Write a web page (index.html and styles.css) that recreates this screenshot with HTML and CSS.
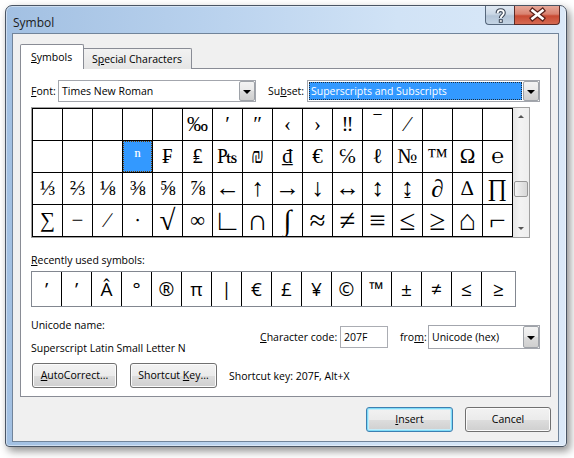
FILE: index.html
```html
<html lang="en">
<head>
  <meta charset="UTF-8">
  <title>Symbol</title>
  <link rel="stylesheet" href="styles.css">
</head>
<body>
  <div class="window">
    <div class="titlebar">
      <div class="title">Symbol</div>
      <div class="caption-btns">
        <div class="cap-btn help">
          <svg width="29" height="19" viewBox="0 0 29 19">
            <path d="M11.6 8.2 C11.6 6.2 13 5.2 14.7 5.2 C16.6 5.2 17.8 6.4 17.8 8 C17.8 10.4 14.8 10.6 14.8 13" fill="none" stroke="#3b4656" stroke-width="4"/>
            <rect x="12.8" y="14.2" width="4" height="3.6" fill="#3b4656"/>
            <path d="M11.6 8.2 C11.6 6.2 13 5.2 14.7 5.2 C16.6 5.2 17.8 6.4 17.8 8 C17.8 10.4 14.8 10.6 14.8 13" fill="none" stroke="#fff" stroke-width="1.8"/>
            <rect x="13.8" y="15.2" width="2" height="1.6" fill="#fff"/>
          </svg>
        </div>
        <div class="cap-btn close">
          <svg width="46" height="19" viewBox="0 0 46 19">
            <path d="M18.5 5.5 L28.5 13.5 M28.5 5.5 L18.5 13.5" stroke="#5a211a" stroke-width="5" stroke-linecap="square"/>
            <path d="M18.5 5.5 L28.5 13.5 M28.5 5.5 L18.5 13.5" stroke="#fff" stroke-width="2.6" stroke-linecap="square"/>
          </svg>
        </div>
      </div>
    </div>

    <div class="client">
      <div class="tabs">
        <div class="tab active"><u>S</u>ymbols</div>
        <div class="tab">S<u>p</u>ecial Characters</div>
      </div>

      <div class="panel">
        <div class="font-row">
          <span class="lbl lbl-font"><u>F</u>ont:</span>
          <div class="combo combo-font">
            <span class="combo-text">Times New Roman</span>
            <span class="drop"><i class="tri"></i></span>
          </div>
          <span class="lbl lbl-subset">Su<u>b</u>set:</span>
          <div class="combo combo-subset">
            <span class="combo-text selected">Superscripts and Subscripts</span>
            <span class="drop"><i class="tri"></i></span>
          </div>
        </div>

        <div class="charmap">
          <div class="cells">
            <div></div><div></div><div></div><div></div><div></div><div>‰</div><div>′</div><div>″</div>
            <div>‹</div><div>›</div><div>‼</div><div>‾</div><div>⁄</div><div></div><div></div><div></div>

            <div></div><div></div><div></div><div class="sel">ⁿ</div><div>₣</div><div>₤</div><div>₧</div><div>₪</div>
            <div>₫</div><div>€</div><div>℅</div><div>ℓ</div><div>№</div><div>™</div><div>Ω</div><div>℮</div>

            <div>⅓</div><div>⅔</div><div>⅛</div><div>⅜</div><div>⅝</div><div>⅞</div><div class="ar">←</div><div class="ar">↑</div>
            <div class="ar">→</div><div class="ar">↓</div><div class="ar">↔</div><div class="ar">↕</div><div class="ar">↨</div><div class="pd">∂</div><div>∆</div><div class="pr">∏</div>

            <div>∑</div><div>−</div><div>∕</div><div>∙</div><div class="op">√</div><div>∞</div><div class="op">∟</div><div class="op">∩</div>
            <div class="op">∫</div><div class="op">≈</div><div class="op">≠</div><div class="op">≡</div><div class="op">≤</div><div class="op">≥</div><div class="op">⌂</div><div class="op">⌐</div>
          </div>
          <div class="scrollbar">
            <div class="sb-btn"><i class="arrow up"></i></div>
            <div class="sb-track"><div class="sb-thumb"></div></div>
            <div class="sb-btn"><i class="arrow down"></i></div>
          </div>
        </div>

        <div class="recent-label"><u>R</u>ecently used symbols:</div>
        <div class="recent">
          <div>’</div><div>’</div><div>Â</div><div>°</div><div>®</div><div>π</div><div>|</div><div>€</div>
          <div>£</div><div>¥</div><div>©</div><div>™</div><div>±</div><div>≠</div><div>≤</div><div>≥</div>
        </div>

        <div class="info-row">
          <div class="uname">
            <div>Unicode name:</div>
            <div class="uname-val">Superscript Latin Small Letter N</div>
          </div>
          <span class="lbl lbl-code"><u>C</u>haracter code:</span>
          <div class="textbox">207F</div>
          <span class="lbl lbl-from">fro<u>m</u>:</span>
          <div class="combo combo-from">
            <span class="combo-text">Unicode (hex)</span>
            <span class="drop"><i class="tri"></i></span>
          </div>
        </div>

        <div class="btn-row">
          <div class="btn btn-autocorrect"><u>A</u>utoCorrect...</div>
          <div class="btn btn-shortcut">Shortcut <u>K</u>ey...</div>
          <span class="shortcut-text">Shortcut key: 207F, Alt+X</span>
        </div>
      </div>

      <div class="footer">
        <div class="btn btn-insert default"><u>I</u>nsert</div>
        <div class="btn btn-cancel">Cancel</div>
      </div>
    </div>
  </div>
</body>
</html>
```

FILE: styles.css
```css
/* Page */
body {
  margin: 0;
  background: #fff;
  font-family: "Open Sans", "Noto Sans", sans-serif;
  font-size: 10.5px;
  color: #000;
}

u {
  text-decoration: underline;
  text-underline-offset: 1px;
}

/* Window frame */
.window {
  margin: 5px 0 0 5px;
  width: 562px;
  height: 442px;
  box-sizing: border-box;
  border: 1px solid #4a5564;
  border-radius: 7px 7px 4px 4px;
  padding: 0 7px 4px 6px;
  background: linear-gradient(to right, #a2c0e2 0%, #b8d1ed 35%, #d1e3f6 70%, #dbe9f8 100%);
  box-shadow: inset 0 0 0 1px rgba(255, 255, 255, 0.45), 3px 4px 9px rgba(0, 0, 0, 0.45);
  display: flex;
  flex-direction: column;
}

.titlebar {
  height: 27px;
  display: flex;
  align-items: flex-start;
}

.title {
  flex: 1;
  padding: 8px 0 0 1px;
  font-size: 12px;
  color: #1b1b1b;
}

.caption-btns {
  display: flex;
  margin-right: -1px;
}

.cap-btn {
  height: 19px;
  box-sizing: border-box;
  border: 1px solid #56677c;
  border-top: none;
}

.cap-btn svg {
  display: block;
  margin-top: -1px;
}

.help {
  width: 29px;
  border-right: none;
  border-radius: 0 0 0 4px;
  background: linear-gradient(#dfe8f2 0%, #cbd8e6 45%, #b3c4d7 55%, #c4d4e4 100%);
}

.close {
  width: 46px;
  border-color: #5c2b27;
  border-radius: 0 0 4px 0;
  background: linear-gradient(#e7a899 0%, #d98270 45%, #c84a33 55%, #d56a52 100%);
}

.close svg {
  margin-left: -1px;
}

/* Client area */
.client {
  flex: 1;
  background: #f0f0f0;
  border: 1px solid #71849a;
  padding: 10px 7px 0 7px;
  display: flex;
  flex-direction: column;
}

.tabs {
  display: flex;
  align-items: flex-end;
  height: 25px;
  margin-bottom: -1px;
  position: relative;
  z-index: 1;
}

.tab {
  box-sizing: border-box;
  border: 1px solid #898c95;
  border-bottom: none;
  height: 21px;
  padding: 3px 0 0 8px;
  width: 108px;
  border-left: none;
  background: linear-gradient(#f2f2f2, #e5e5e5);
  border-radius: 0 2px 0 0;
}

.tab.active {
  width: 64px;
  height: 25px;
  padding: 5px 0 0 10px;
  border-left: 1px solid #898c95;
  background: #fff;
  border-radius: 2px 2px 0 0;
}

.panel {
  background: #fff;
  border: 1px solid #898c95;
  padding: 11px 10px 8px 10px;
}

/* Font / subset row */
.font-row {
  display: flex;
  align-items: center;
  height: 22px;
}

.lbl-font {
  width: 27px;
}

.lbl-subset {
  width: 39px;
  margin-left: 12px;
}

.combo {
  box-sizing: border-box;
  border: 1px solid #a3a6ad;
  background: #fff;
  display: flex;
  height: 22px;
}

.combo-text {
  flex: 1;
  padding: 3px 0 0 3px;
  white-space: nowrap;
  overflow: hidden;
}

.combo-text.selected {
  margin: 1px;
  padding: 2px 0 0 2px;
  background: #3399ff;
  color: #fff;
  outline: 1px dotted #1f2f3f;
  outline-offset: -1px;
}

.drop {
  width: 16px;
  box-sizing: border-box;
  border: 1px solid #9ea2a8;
  border-radius: 2px;
  background: linear-gradient(#f3f3f3 0%, #e9e9e9 50%, #dcdcdc 51%, #cfcfcf 100%);
  display: flex;
  align-items: center;
  justify-content: center;
}

.tri {
  width: 0;
  height: 0;
  border-left: 4px solid transparent;
  border-right: 4px solid transparent;
  border-top: 4px solid #000;
  margin-top: 1px;
}

.combo-font {
  width: 198px;
}

.combo-subset {
  width: 233px;
}

/* Character map */
.charmap {
  margin-top: 5px;
  width: 499px;
  box-sizing: border-box;
  border: 1px solid #a0a0a0;
  display: flex;
}

.cells {
  display: grid;
  grid-template-columns: repeat(16, 29px);
  grid-auto-rows: 31px;
  gap: 1px;
  background: #000;
  border: 1px solid #000;
}

.cells div {
  background: #fff;
  font-family: "Liberation Serif", "DejaVu Serif", serif;
  font-size: 21px;
  line-height: 31px;
  text-align: center;
  white-space: nowrap;
  overflow: hidden;
}

/* TNR draws arrows and operators larger than Liberation Serif does */
.cells .ar {
  font-size: 25px;
  line-height: 29px;
}

.cells .op {
  font-size: 29px;
}

.cells .pd {
  font-size: 25px;
}

.cells .pr {
  font-size: 24px;
}

.cells .sel {
  background: #3399ff;
  color: #fff;
  outline: 1px dotted #6b3c00;
  outline-offset: -1px;
}

.scrollbar {
  width: 16px;
  display: flex;
  flex-direction: column;
  background: linear-gradient(to right, #e6e6e6, #f3f3f3 40%, #eeeeee);
}

.sb-btn {
  height: 17px;
  display: flex;
  align-items: center;
  justify-content: center;
}

.arrow {
  width: 0;
  height: 0;
  border-left: 3px solid transparent;
  border-right: 3px solid transparent;
}

.arrow.up {
  border-bottom: 3px solid #555;
}

.arrow.down {
  border-top: 3px solid #555;
}

.sb-track {
  flex: 1;
  padding-top: 56px;
}

.sb-thumb {
  height: 16px;
  margin: 0 1px;
  box-sizing: border-box;
  border: 1px solid #979797;
  border-radius: 2px;
  background: linear-gradient(to right, #f5f5f5, #e4e4e4 50%, #d7d7d7);
}

/* Recently used */
.recent-label {
  margin-top: 15px;
  line-height: 15px;
}

.recent {
  margin-top: 3px;
  width: 485px;
  height: 36px;
  box-sizing: border-box;
  border: 1px solid #828790;
  display: flex;
}

.recent div {
  width: 29px;
  border-right: 1px solid #000;
  text-align: center;
  font-family: "Open Sans", "DejaVu Sans", sans-serif;
  font-size: 19px;
  line-height: 34px;
}

.recent div:last-child {
  flex: 1;
  border-right: none;
}

/* Unicode name / code */
.info-row {
  margin-top: 11px;
  display: flex;
  align-items: center;
}

.uname {
  width: 229px;
  line-height: 15px;
}

.uname-val {
  margin-top: 8px;
}

.lbl-code {
  width: 80px;
}

.textbox {
  width: 48px;
  height: 22px;
  box-sizing: border-box;
  border: 1px solid #abadb3;
  padding: 3px 0 0 3px;
  background: #fff;
}

.lbl-from {
  width: 28px;
  margin-left: 12px;
}

.combo-from {
  width: 112px;
  height: 24px;
}

.combo-from .combo-text {
  padding-top: 4px;
}

/* Buttons */
.btn-row {
  margin-top: 7px;
  display: flex;
  align-items: center;
}

.btn {
  height: 25px;
  box-sizing: border-box;
  border: 1px solid #707070;
  border-radius: 3px;
  background: linear-gradient(#f2f2f2 0%, #ebebeb 50%, #dddddd 51%, #cfcfcf 100%);
  box-shadow: inset 0 0 0 1px #fbfbfb;
  text-align: center;
  line-height: 22px;
}

.btn-autocorrect {
  width: 85px;
  margin-left: 1px;
}

.btn-shortcut {
  width: 87px;
  margin-left: 13px;
}

.shortcut-text {
  margin-left: 12px;
}

.footer {
  margin-top: 10px;
  display: flex;
  justify-content: flex-end;
  gap: 12px;
}

.btn-insert {
  width: 87px;
}

.btn-cancel {
  width: 86px;
}

.btn.default {
  border-color: #3c7fb1;
  box-shadow: inset 0 0 0 1px #7fdcf8, inset 0 0 0 2px #c5ecf9;
}
```
